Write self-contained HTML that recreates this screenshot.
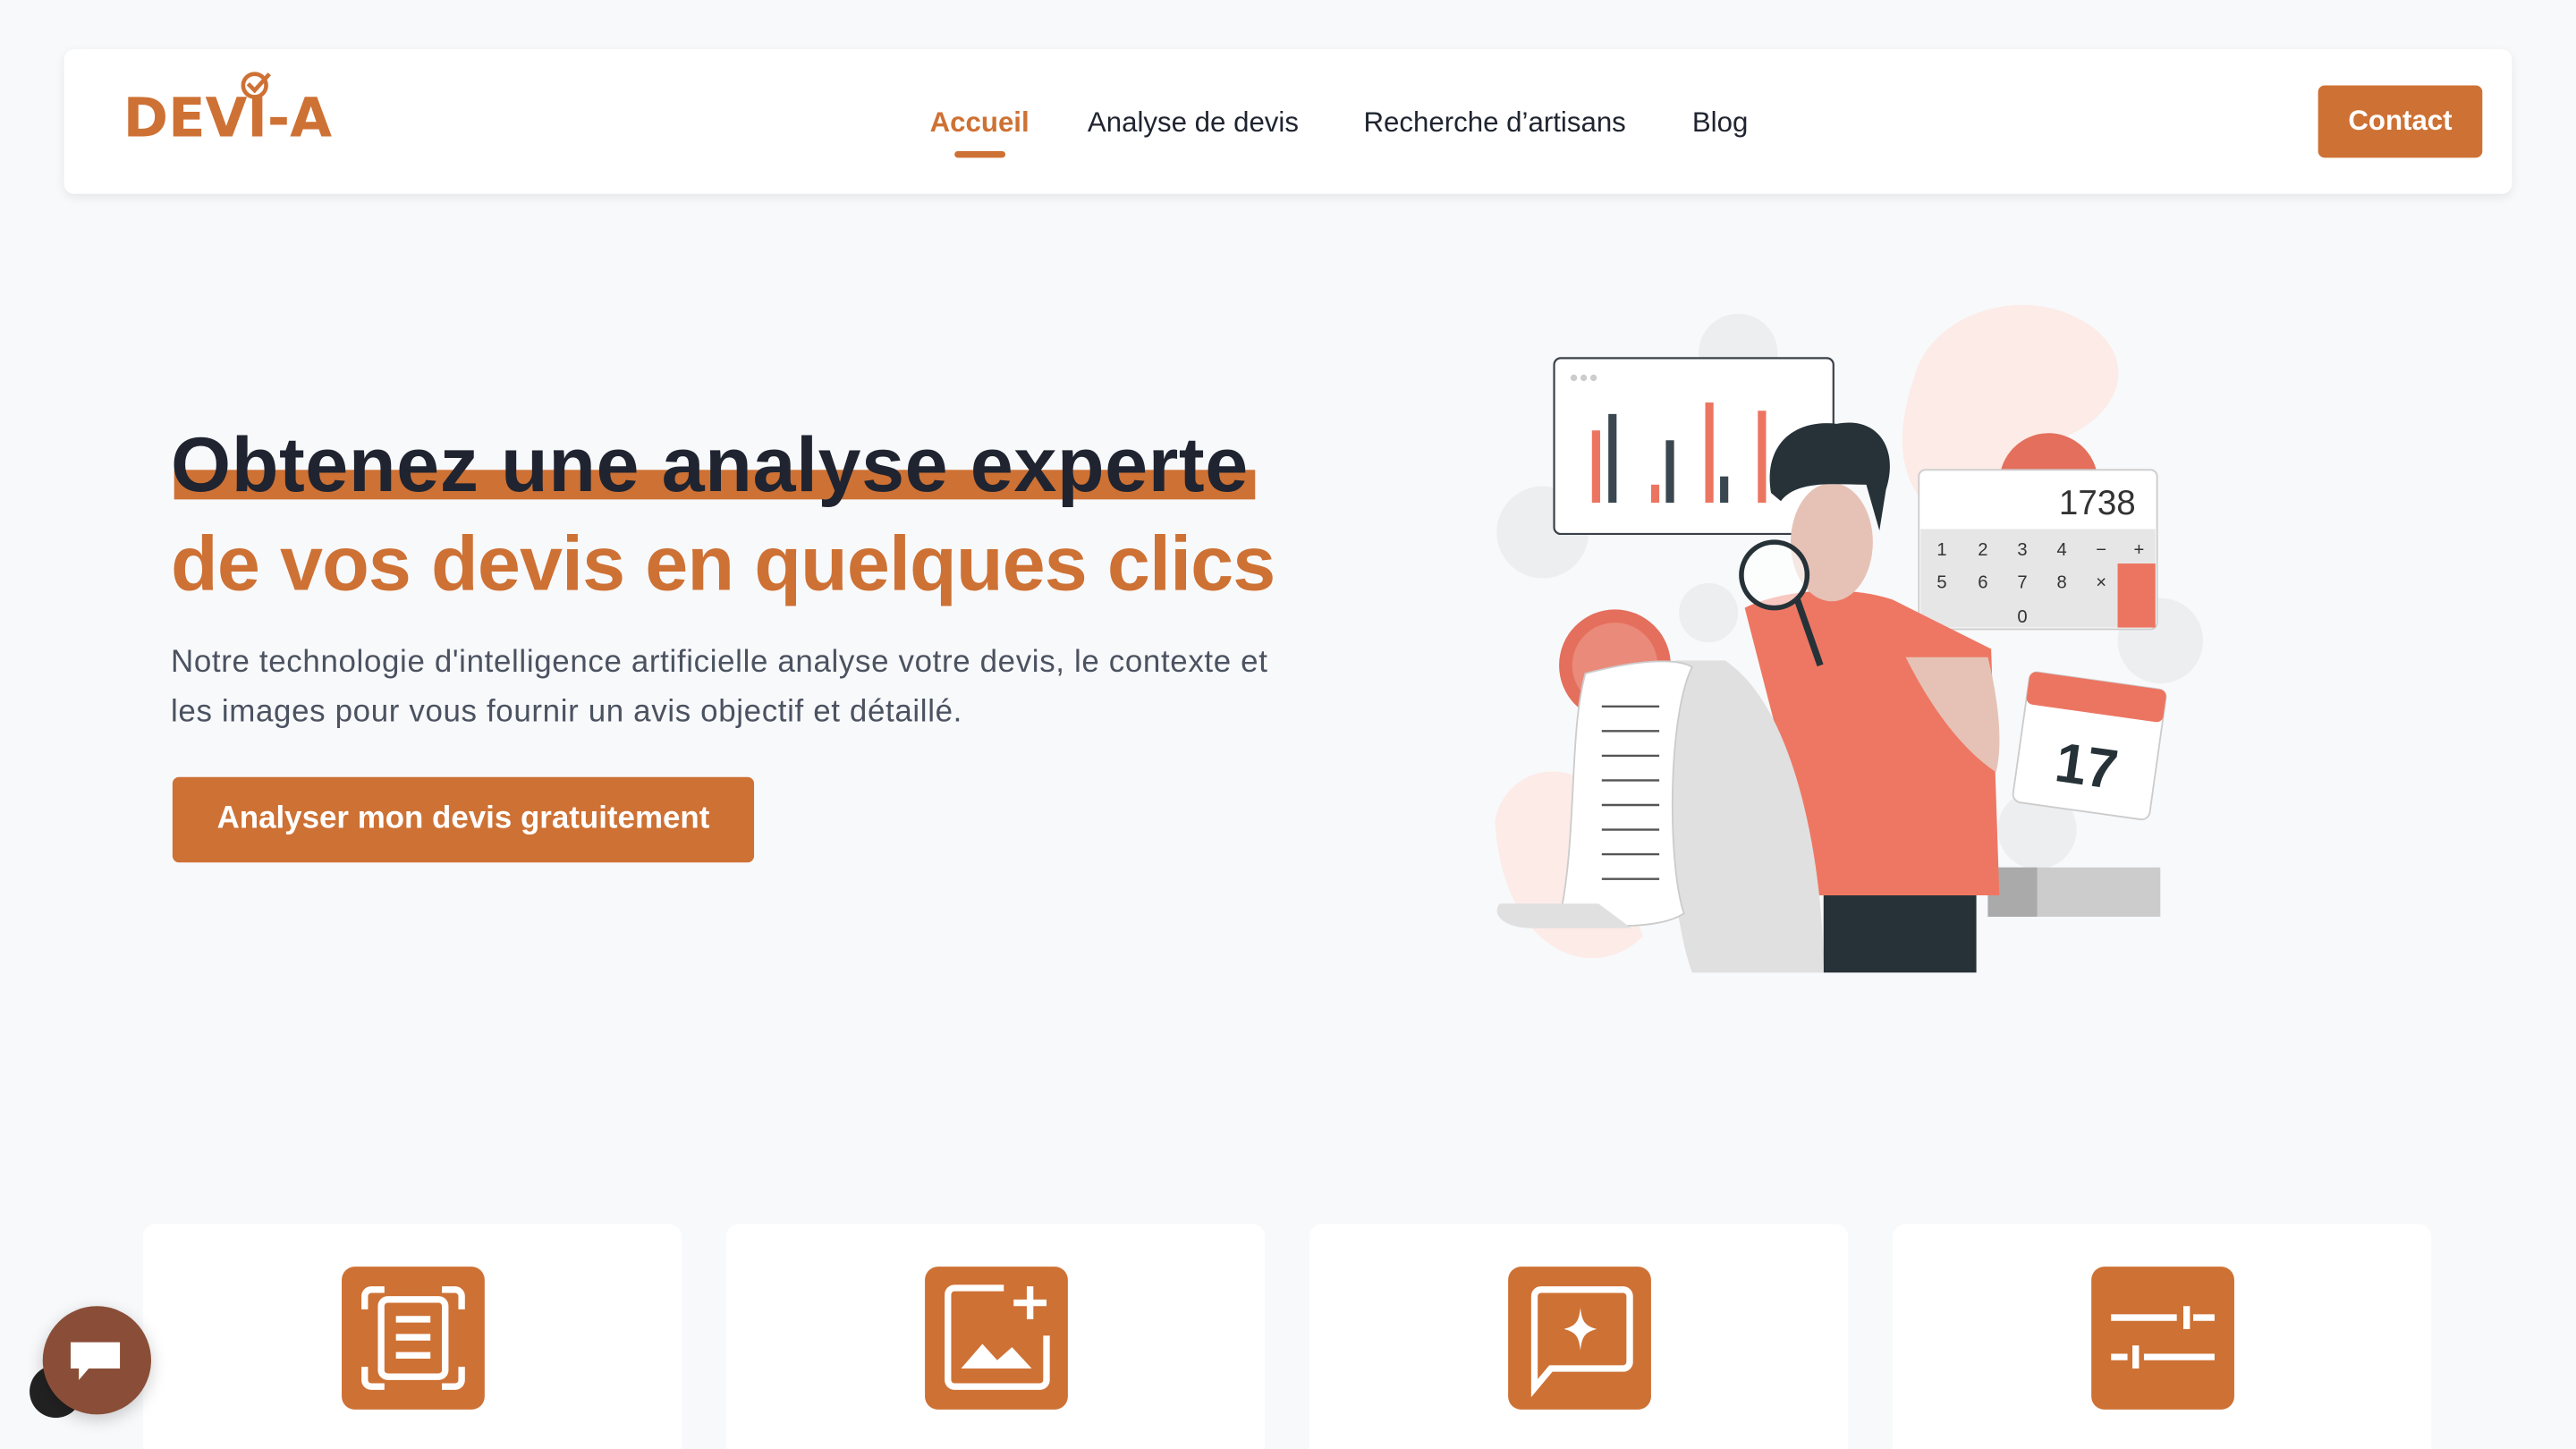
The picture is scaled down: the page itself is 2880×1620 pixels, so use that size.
<!DOCTYPE html>
<html><head><meta charset="utf-8"><style>
*{margin:0;padding:0;box-sizing:border-box}
html,body{width:2880px;height:1620px;overflow:hidden;background:#f8f9fb}
#w{width:1568px;height:882px;transform:scale(1.83673);transform-origin:0 0;position:relative;font-family:"Liberation Sans",sans-serif;background:#f8f9fb}
.nav{position:absolute;left:39px;top:30px;width:1490px;height:88px;background:#fff;border-radius:6px;box-shadow:0 2px 6px rgba(0,0,0,.08)}
.logo{position:absolute;left:36px;top:22px;font-weight:900;font-size:33px;color:#ce7134;letter-spacing:0px;font-family:"DejaVu Sans","Liberation Sans",sans-serif}
.menu a{position:absolute;top:35px;font-size:17px;color:#1f2430;text-decoration:none}
.btn{position:absolute;background:#ce7134;color:#fff;border-radius:4px;font-weight:bold;display:flex;align-items:center;justify-content:center}
h1{position:absolute;left:104px;top:253px;font-size:47px;line-height:60px;font-weight:bold;color:#1f2430}
.p{position:absolute;left:104px;top:389px;font-size:19px;line-height:30px;color:#4b5260;width:720px;white-space:nowrap;letter-spacing:0.35px}
.card{position:absolute;top:745px;width:328px;height:150px;background:#fff;border-radius:8px}
.ic{position:absolute;left:121px;top:26px;width:87px;height:87px;background:#ce7134;border-radius:8px}
</style></head><body><div id="w">
<div class="nav">
<div class="logo">DEVI-A</div>
<svg style="position:absolute;left:106px;top:13px" width="22" height="18" viewBox="0 0 22 18"><circle cx="10" cy="9" r="7" fill="none" stroke="#ce7134" stroke-width="2.5"/><path d="M6 8l4 4 9-10" fill="none" stroke="#ce7134" stroke-width="2.5"/></svg>
<div class="menu">
<a style="left:527px;color:#ce7134;font-weight:bold">Accueil</a>
<div style="position:absolute;left:542px;top:62px;width:31px;height:4px;border-radius:2px;background:#ce7134"></div>
<a style="left:623px">Analyse de devis</a>
<a style="left:791px">Recherche d’artisans</a>
<a style="left:991px">Blog</a>
</div>
<div class="btn" style="left:1372px;top:22px;width:100px;height:44px;font-size:17px">Contact</div>
</div>
<div style="position:absolute;left:106px;top:286px;width:658px;height:18px;background:#ce7134"></div>
<h1><span style="letter-spacing:0.3px">Obtenez une analyse experte</span><br><span style="color:#ce7134;letter-spacing:-0.5px">de vos devis en quelques clics</span></h1>
<div class="p">Notre technologie d'intelligence artificielle analyse votre devis, le contexte et<br>les images pour vous fournir un avis objectif et détaillé.</div>
<div class="btn" style="left:105px;top:473px;width:354px;height:52px;font-size:19px">Analyser mon devis gratuitement</div>

<svg style="position:absolute;left:0;top:0" width="1568" height="882">
<path d="M1165 230c10-40 70-60 110-30 30 25 10 60-30 70-30 10-40 40-55 50-40-20-35-60-25-90z" fill="#fcebe7"/>
<path d="M910 500c5-30 40-40 60-20l30 90c-30 30-85 10-90-70z" fill="#fcebe7"/>
<g fill="#eceef0"><circle cx="1058" cy="215" r="24"/><circle cx="939" cy="324" r="28"/><circle cx="1040" cy="373" r="18"/><circle cx="1315" cy="390" r="26"/><circle cx="1240" cy="505" r="24"/></g>
<circle cx="983" cy="405" r="34" fill="#e46f5c"/><circle cx="983" cy="405" r="26" fill="#ea8a7a"/>
<path d="M1218 286a30 30 0 0 1 58 0z" fill="#e46f5c"/>
<rect x="946" y="218" width="170" height="107" rx="4" fill="#fff" stroke="#3a4148" stroke-width="1.2"/>
<g fill="#ccc"><circle cx="958" cy="230" r="2"/><circle cx="964" cy="230" r="2"/><circle cx="970" cy="230" r="2"/></g>
<g fill="#ec7561"><rect x="969" y="262" width="5" height="44"/><rect x="1005" y="295" width="5" height="11"/><rect x="1038" y="245" width="5" height="61"/><rect x="1070" y="250" width="5" height="56"/></g>
<g fill="#3a4750"><rect x="979" y="252" width="5" height="54"/><rect x="1014" y="268" width="5" height="38"/><rect x="1047" y="290" width="5" height="16"/></g>
<rect x="1168" y="286" width="145" height="97" rx="4" fill="#fff" stroke="#ccc"/>
<rect x="1169" y="322" width="143" height="60" fill="#e6e6e6"/>
<rect x="1289" y="343" width="23" height="39" fill="#ec7561"/>
<text x="1300" y="313" font-family="Liberation Sans" font-size="21" fill="#333" text-anchor="end">1738</text>
<g font-family="Liberation Sans" font-size="11" fill="#333" text-anchor="middle"><text x="1182" y="338">1</text><text x="1207" y="338">2</text><text x="1231" y="338">3</text><text x="1255" y="338">4</text><text x="1279" y="338">−</text><text x="1302" y="338">+</text><text x="1182" y="358">5</text><text x="1207" y="358">6</text><text x="1231" y="358">7</text><text x="1255" y="358">8</text><text x="1279" y="358">×</text><text x="1231" y="379">0</text></g>
<g transform="rotate(8 1272 453)"><rect x="1230" y="414" width="84" height="80" rx="5" fill="#fff" stroke="#ccc"/><rect x="1230" y="414" width="84" height="20" rx="4" fill="#ec7561"/><text x="1272" y="478" font-family="Liberation Sans" font-weight="bold" font-size="34" fill="#263238" text-anchor="middle">17</text></g>
<g fill="#ccc"><rect x="1210" y="528" width="105" height="30"/></g><rect x="1210" y="528" width="30" height="30" fill="#aaa"/>
<path d="M1062 370c20-10 60-15 90-5l60 30 5 150h-110z" fill="#ee7763"/>
<rect x="1110" y="545" width="93" height="47" fill="#263238"/>
<path d="M1160 400c20 40 40 60 55 70 5-20 0-50-5-70z" fill="#e6c2b6"/>
<ellipse cx="1115" cy="330" rx="25" ry="36" fill="#e6c2b6"/>
<path d="M1078 300c-5-30 15-45 40-42 25-5 38 15 30 40l-4 25-8-28c-20 0-42-3-52 10z" fill="#263238"/>
<path d="M1020 402c-10 40-5 150 10 190h80c0-60-15-160-60-190z" fill="#e0e0e0"/>
<path d="M965 410c30-8 55-10 65-4-15 30-15 120-5 150-15 10-55 10-75 0 10-50 5-110 15-146z" fill="#fff" stroke="#ccc"/>
<g stroke="#555" stroke-width="1.3">
<line x1="975" y1="430" x2="1010" y2="430"/><line x1="975" y1="445" x2="1010" y2="445"/><line x1="975" y1="460" x2="1010" y2="460"/><line x1="975" y1="475" x2="1010" y2="475"/><line x1="975" y1="490" x2="1010" y2="490"/><line x1="975" y1="505" x2="1010" y2="505"/><line x1="975" y1="520" x2="1010" y2="520"/><line x1="975" y1="535" x2="1010" y2="535"/></g>
<path d="M913 550h60l20 15h-60c-20 0-25-10-20-15z" fill="#e0e0e0"/>
<circle cx="1080" cy="350" r="20" fill="rgba(255,255,255,.6)" stroke="#263238" stroke-width="3"/>
<line x1="1094" y1="365" x2="1108" y2="405" stroke="#263238" stroke-width="4"/>
</svg>

<div class="card" style="left:87px"><div class="ic"><svg width="87" height="87" fill="none" stroke="#fff" stroke-width="4"><path d="M14 26v-8a4 4 0 0 1 4-4h8M61 14h8a4 4 0 0 1 4 4v8M73 61v8a4 4 0 0 1-4 4h-8M26 73h-8a4 4 0 0 1-4-4v-8"/><rect x="24" y="20" width="39" height="47" rx="4"/><path d="M33 32h21M33 43h21M33 54h21"/></svg></div></div>
<div class="card" style="left:442px"><div class="ic"><svg width="87" height="87" fill="none" stroke="#fff" stroke-width="4"><path d="M48 13H18a4 4 0 0 0-4 4v52a4 4 0 0 0 4 4h52a4 4 0 0 0 4-4V42"/><path d="M64 12v20M54 22h20"/><path d="M22 62l13-15 9 10 9-8 12 13z" fill="#fff" stroke="none"/></svg></div></div>
<div class="card" style="left:797px"><div class="ic"><svg width="87" height="87" fill="none" stroke="#fff" stroke-width="4"><path d="M16 18a4 4 0 0 1 4-4h50a4 4 0 0 1 4 4v40a4 4 0 0 1-4 4H26l-10 12z"/><path d="M44 25c1 9 3 11 10 13-7 2-9 4-10 13-1-9-3-11-10-13 7-2 9-4 10-13z" fill="#fff" stroke="none"/></svg></div></div>
<div class="card" style="left:1152px"><div class="ic"><svg width="87" height="87" fill="none" stroke="#fff" stroke-width="4"><path d="M12 31h40M62 31h13M58 24v14M12 55h10M32 55h43M27 48v14"/></svg></div></div>

<div style="position:absolute;left:18px;top:831px;width:32px;height:32px;border-radius:50%;background:#222"></div>
<div style="position:absolute;left:26px;top:795px;width:66px;height:66px;border-radius:50%;background:#8a4e38;box-shadow:0 3px 10px rgba(0,0,0,.2)"></div>
<svg style="position:absolute;left:42px;top:814px" width="34" height="30"><path d="M1 3h30v16H12l-6 7v-7H1z" fill="#fff"/></svg>
</div></body></html>
